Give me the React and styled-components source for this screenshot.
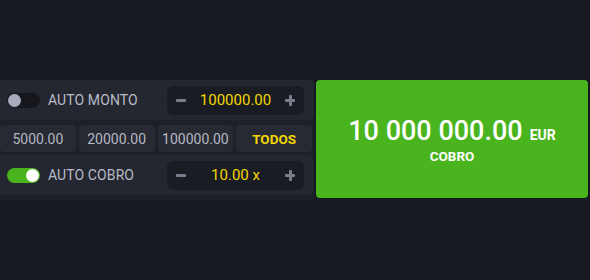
import React, { useState } from 'react'
import styled, { createGlobalStyle } from 'styled-components'

const GlobalStyle = createGlobalStyle`
        html, body {
                margin: 0;
                padding: 0;
                background: #171920;
                font-family: Roboto, "Noto Sans", sans-serif;
        }
`;

const Page = styled.div`
        width: 590px;
        height: 280px;
        padding-top: 80px;
        box-sizing: border-box;
        display: flex;
        align-items: flex-start;
`;

const Panel = styled.div`
        width: 314px;
        height: 120px;
        background: #1e2028;
        display: flex;
        flex-direction: column;
`;

const Row = styled.div`
        height: 40px;
        display: flex;
        align-items: center;
        padding: 0 10px 0 7px;
        background: #252730;
        border-radius: 0 6px 6px 0;
        box-sizing: border-box;
`;

const QuickRow = styled.div`
        display: flex;
        gap: 3px;
        margin: 5px 2px 3px 0;
        height: 27px;
`;

const QuickButton = styled.div`
        flex: 1;
        display: flex;
        align-items: center;
        justify-content: center;
        background: #282a33;
        border-radius: 4px;
        font-size: ${p => (p.accent ? '13.5px' : '14px')};
        color: ${p => (p.accent ? '#f2d600' : '#b4b7c4')};
        font-weight: ${p => (p.accent ? 700 : 400)};
`;

const Toggle = styled.div`
        width: 33px;
        height: 15px;
        border-radius: 8px;
        background: ${p => (p.on ? '#4ab41e' : '#15171c')};
        position: relative;
        flex-shrink: 0;
        cursor: pointer;
`;

const Knob = styled.div`
        position: absolute;
        top: 1px;
        left: ${p => (p.on ? '19px' : '1px')};
        width: 13px;
        height: 13px;
        border-radius: 50%;
        background: ${p => (p.on ? '#ffffff' : '#a9abbd')};
`;

const Label = styled.span`
        margin-left: 8px;
        font-size: 14px;
        color: #b8bbc8;
        letter-spacing: 0.1px;
`;

const Stepper = styled.div`
        margin-left: auto;
        width: 137px;
        height: 29px;
        background: #1a1c23;
        border-radius: 6px;
        display: flex;
        align-items: center;
        padding: 0 8px;
        box-sizing: border-box;
`;

const StepButton = styled.div`
        width: 12px;
        height: 12px;
        position: relative;
        cursor: pointer;
        flex-shrink: 0;

        &::before, &::after {
                content: '';
                position: absolute;
                background: #7a7d8b;
                border-radius: 1px;
        }
        &::before {
                left: 1px;
                right: 1px;
                top: 5px;
                height: 3px;
        }
        &::after {
                display: ${p => (p.plus ? 'block' : 'none')};
                top: 1px;
                bottom: 0;
                left: 5px;
                width: 3px;
        }
`;

const Value = styled.span`
        flex: 1;
        text-align: center;
        font-size: 15px;
        color: #f2d600;
`;

const CashOut = styled.div`
        width: 272px;
        height: 118px;
        margin-left: 2px;
        background: #49b41e;
        border-radius: 4px;
        display: flex;
        flex-direction: column;
        align-items: center;
        justify-content: center;
        color: #ffffff;
        cursor: pointer;
`;

const Amount = styled.div`
        display: flex;
        align-items: baseline;
        gap: 7px;
        font-size: 27px;
        font-weight: 500;
        margin-top: 1px;
`;

const Currency = styled.span`
        font-size: 14px;
        font-weight: 700;
`;

const Caption = styled.div`
        font-size: 13.5px;
        font-weight: 700;
        margin-top: 1px;
`;

const App = () => {
        const [autoBet, setAutoBet] = useState(false);
        const [autoCash, setAutoCash] = useState(true);

        return (
                <Page>
                        <GlobalStyle />
                        <Panel>
                                <Row>
                                        <Toggle on={autoBet} onClick={() => setAutoBet(!autoBet)}>
                                                <Knob on={autoBet} />
                                        </Toggle>
                                        <Label>AUTO MONTO</Label>
                                        <Stepper>
                                                <StepButton />
                                                <Value>100000.00</Value>
                                                <StepButton plus />
                                        </Stepper>
                                </Row>
                                <QuickRow>
                                        <QuickButton>5000.00</QuickButton>
                                        <QuickButton>20000.00</QuickButton>
                                        <QuickButton>100000.00</QuickButton>
                                        <QuickButton accent>TODOS</QuickButton>
                                </QuickRow>
                                <Row>
                                        <Toggle on={autoCash} onClick={() => setAutoCash(!autoCash)}>
                                                <Knob on={autoCash} />
                                        </Toggle>
                                        <Label>AUTO COBRO</Label>
                                        <Stepper>
                                                <StepButton />
                                                <Value>10.00 x</Value>
                                                <StepButton plus />
                                        </Stepper>
                                </Row>
                        </Panel>
                        <CashOut>
                                <Amount>
                                        10 000 000.00
                                        <Currency>EUR</Currency>
                                </Amount>
                                <Caption>COBRO</Caption>
                        </CashOut>
                </Page>
        )
}

export default App
